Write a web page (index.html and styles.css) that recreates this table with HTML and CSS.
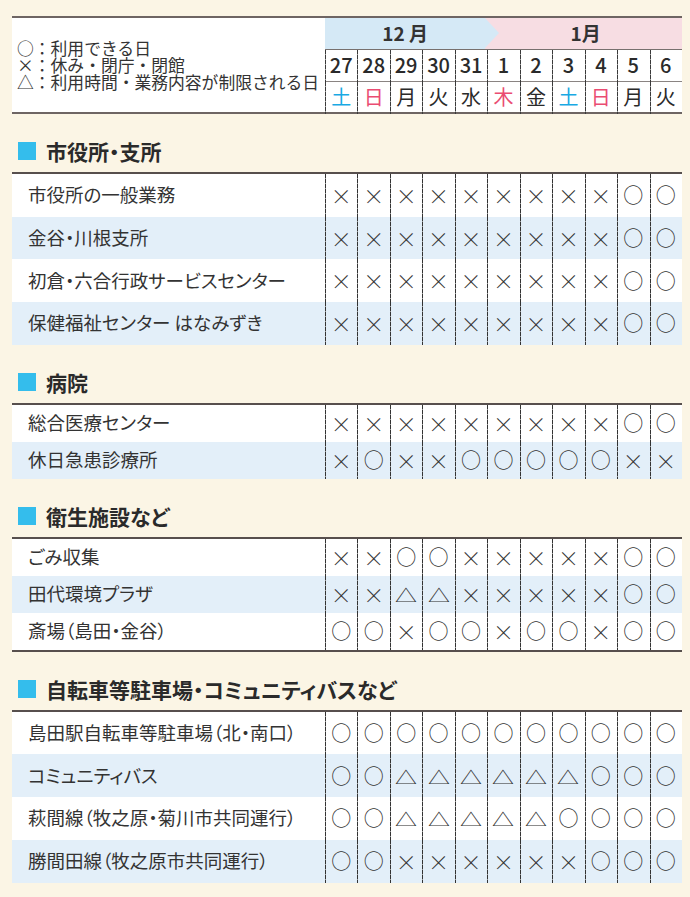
FILE: index.html
```html
<!DOCTYPE html>
<html lang="ja">
<head>
<meta charset="utf-8">
<title>年末年始の業務</title>
<link rel="stylesheet" href="styles.css">
</head>
<body>
<div class="page">
  <div class="head">
    <div class="legend">
      <p>○：利用できる日</p>
      <p>×：休み・閉庁・閉館</p>
      <p>△：利用時間・業務内容が制限される日</p>
    </div>
    <div class="cal">
      <div class="months"><div class="m12">12 月</div><div class="m1">1月</div></div>
      <div class="days"><span>27</span><span>28</span><span>29</span><span>30</span><span>31</span><span>1</span><span>2</span><span>3</span><span>4</span><span>5</span><span>6</span></div>
      <div class="wdays"><span class="sat">土</span><span class="sun">日</span><span>月</span><span>火</span><span>水</span><span class="sun">木</span><span>金</span><span class="sat">土</span><span class="sun">日</span><span>月</span><span>火</span></div>
    </div>
  </div>

  <section class="sec">
    <h2 class="ttl">市役所・支所</h2>
    <div class="tbl tall">
      <div class="row"><div class="lbl">市役所の一般業務</div><i class="x">×</i><i class="x">×</i><i class="x">×</i><i class="x">×</i><i class="x">×</i><i class="x">×</i><i class="x">×</i><i class="x">×</i><i class="x">×</i><i class="o">○</i><i class="o">○</i></div>
      <div class="row"><div class="lbl">金谷・川根支所</div><i class="x">×</i><i class="x">×</i><i class="x">×</i><i class="x">×</i><i class="x">×</i><i class="x">×</i><i class="x">×</i><i class="x">×</i><i class="x">×</i><i class="o">○</i><i class="o">○</i></div>
      <div class="row"><div class="lbl">初倉・六合行政サービスセンター</div><i class="x">×</i><i class="x">×</i><i class="x">×</i><i class="x">×</i><i class="x">×</i><i class="x">×</i><i class="x">×</i><i class="x">×</i><i class="x">×</i><i class="o">○</i><i class="o">○</i></div>
      <div class="row"><div class="lbl">保健福祉センター はなみずき</div><i class="x">×</i><i class="x">×</i><i class="x">×</i><i class="x">×</i><i class="x">×</i><i class="x">×</i><i class="x">×</i><i class="x">×</i><i class="x">×</i><i class="o">○</i><i class="o">○</i></div>
    </div>
  </section>

  <section class="sec">
    <h2 class="ttl">病院</h2>
    <div class="tbl short">
      <div class="row"><div class="lbl">総合医療センター</div><i class="x">×</i><i class="x">×</i><i class="x">×</i><i class="x">×</i><i class="x">×</i><i class="x">×</i><i class="x">×</i><i class="x">×</i><i class="x">×</i><i class="o">○</i><i class="o">○</i></div>
      <div class="row"><div class="lbl">休日急患診療所</div><i class="x">×</i><i class="o">○</i><i class="x">×</i><i class="x">×</i><i class="o">○</i><i class="o">○</i><i class="o">○</i><i class="o">○</i><i class="o">○</i><i class="x">×</i><i class="x">×</i></div>
    </div>
  </section>

  <section class="sec">
    <h2 class="ttl">衛生施設など</h2>
    <div class="tbl short closed">
      <div class="row"><div class="lbl">ごみ収集</div><i class="x">×</i><i class="x">×</i><i class="o">○</i><i class="o">○</i><i class="x">×</i><i class="x">×</i><i class="x">×</i><i class="x">×</i><i class="x">×</i><i class="o">○</i><i class="o">○</i></div>
      <div class="row"><div class="lbl">田代環境プラザ</div><i class="x">×</i><i class="x">×</i><i class="t"><b>△</b></i><i class="t"><b>△</b></i><i class="x">×</i><i class="x">×</i><i class="x">×</i><i class="x">×</i><i class="x">×</i><i class="o">○</i><i class="o">○</i></div>
      <div class="row"><div class="lbl">斎場（島田・金谷）</div><i class="o">○</i><i class="o">○</i><i class="x">×</i><i class="o">○</i><i class="o">○</i><i class="x">×</i><i class="o">○</i><i class="o">○</i><i class="x">×</i><i class="o">○</i><i class="o">○</i></div>
    </div>
  </section>

  <section class="sec">
    <h2 class="ttl">自転車等駐車場・コミュニティバスなど</h2>
    <div class="tbl tall">
      <div class="row"><div class="lbl">島田駅自転車等駐車場（北・南口）</div><i class="o">○</i><i class="o">○</i><i class="o">○</i><i class="o">○</i><i class="o">○</i><i class="o">○</i><i class="o">○</i><i class="o">○</i><i class="o">○</i><i class="o">○</i><i class="o">○</i></div>
      <div class="row"><div class="lbl">コミュニティバス</div><i class="o">○</i><i class="o">○</i><i class="t"><b>△</b></i><i class="t"><b>△</b></i><i class="t"><b>△</b></i><i class="t"><b>△</b></i><i class="t"><b>△</b></i><i class="t"><b>△</b></i><i class="o">○</i><i class="o">○</i><i class="o">○</i></div>
      <div class="row"><div class="lbl">萩間線（牧之原・菊川市共同運行）</div><i class="o">○</i><i class="o">○</i><i class="t"><b>△</b></i><i class="t"><b>△</b></i><i class="t"><b>△</b></i><i class="t"><b>△</b></i><i class="t"><b>△</b></i><i class="o">○</i><i class="o">○</i><i class="o">○</i><i class="o">○</i></div>
      <div class="row"><div class="lbl">勝間田線（牧之原市共同運行）</div><i class="o">○</i><i class="o">○</i><i class="x">×</i><i class="x">×</i><i class="x">×</i><i class="x">×</i><i class="x">×</i><i class="x">×</i><i class="o">○</i><i class="o">○</i><i class="o">○</i></div>
    </div>
  </section>
</div>
</body>
</html>
```

FILE: styles.css
```css
* { box-sizing: border-box; margin: 0; padding: 0; }

html, body {
  background: #fbf5e5;
}

body {
  font-family: "Noto Sans CJK JP", "Noto Sans", sans-serif;
  color: #333;
  width: 690px;
  height: 897px;
  overflow: hidden;
}

.page {
  padding: 16px 8px 0 12px;
}

/* ---------- header ---------- */
.head {
  display: grid;
  grid-template-columns: 313px 1fr;
  border-top: 2px solid #6e6563;
  border-bottom: 2px solid #6e6563;
  background: #fff;
}

.legend {
  display: flex;
  flex-direction: column;
  justify-content: center;
  padding-left: 5px;
  font-size: 16.8px;
  line-height: 17px;
  color: #333;
}

.cal {
  display: flex;
  flex-direction: column;
}

.months {
  display: flex;
  height: 32px;
  border-bottom: 1px solid #77706e;
  font-weight: 700;
  font-size: 19px;
  color: #333;
  background: #f7dde3;
}

.m12, .m1 {
  display: flex;
  align-items: center;
  justify-content: center;
  padding-bottom: 2px;
}

.m12 {
  flex: 5;
  background: #d5e9f6;
  position: relative;
}

.m12::after {
  content: "";
  position: absolute;
  left: 100%;
  top: 0;
  border-left: 14px solid #d5e9f6;
  border-top: 15.5px solid transparent;
  border-bottom: 15.5px solid transparent;
}

.m1 {
  flex: 6;
  padding-left: 4px;
}

.days, .wdays {
  display: grid;
  grid-template-columns: repeat(11, 1fr);
  font-size: 20px;
  font-weight: 500;
  color: #2a2a2a;
}

.days {
  height: 32px;
  border-bottom: 1px solid #8a8482;
}

.wdays {
  height: 30px;
}

.days span, .wdays span {
  display: flex;
  align-items: center;
  justify-content: center;
  padding-bottom: 3px;
  background: repeating-linear-gradient(to bottom, #3a3a3a 0 4px, #9a9a9a 4px 5px) left top / 1px 100% no-repeat;
}

.wdays span { font-weight: 400; }
.wdays .sat { color: #19a9e3; }
.wdays .sun { color: #ea4c72; }

/* ---------- sections ---------- */
.sec {
  padding-top: 25px;
}

.ttl {
  display: flex;
  align-items: center;
  height: 24px;
  margin-bottom: 9px;
  padding-left: 6px;
  font-size: 21px;
  font-weight: 700;
  color: #2a2a2a;
  font-feature-settings: "palt";
}

.ttl::before {
  content: "";
  width: 18px;
  height: 18px;
  margin-right: 10px;
  background: #34bdec;
  flex: none;
}

.tbl {
  border-top: 2px solid #574f4d;
}

.tbl.closed {
  border-bottom: 2px solid #574f4d;
}

.row {
  display: grid;
  grid-template-columns: 313px repeat(11, 1fr);
  background: #fff;
}

.row:nth-child(even) {
  background: #e3eff9;
}

.tall .row { height: 42.7px; }
.short .row { height: 37px; }

.lbl {
  display: flex;
  align-items: center;
  padding-left: 16px;
  padding-bottom: 2px;
  font-size: 18.5px;
  color: #333;
  font-feature-settings: "palt";
  white-space: nowrap;
}

.row i {
  font-style: normal;
  display: flex;
  align-items: center;
  justify-content: center;
  color: #333;
  line-height: 1;
  background: repeating-linear-gradient(to bottom, #333 0 4px, #999 4px 5px) left top / 1px 100% no-repeat;
}

.row i.o { font-size: 20px; }
.row i.x { font-size: 21px; font-weight: 300; }
.row i.t b {
  display: block;
  font-weight: 400;
  font-size: 18px;
  transform: scale(1.22, 0.95);
}
```
